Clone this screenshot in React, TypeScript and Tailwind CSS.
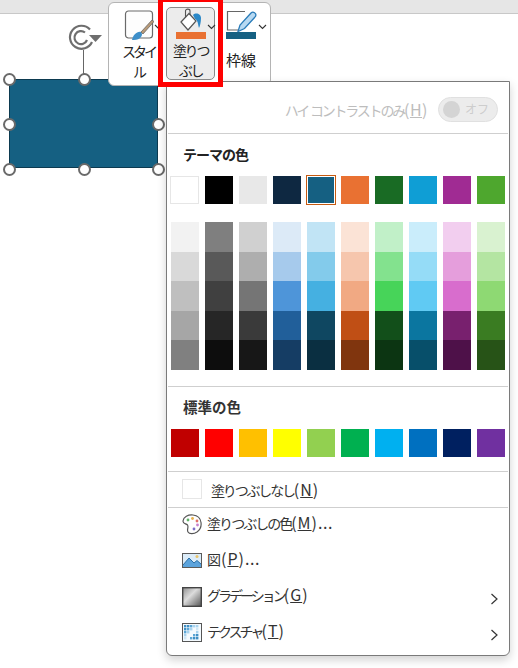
import React from "react";

const theme = ["bg-[#ffffff] border border-[#e6e6e6]", "bg-[#000000]", "bg-[#e8e8e8]", "bg-[#0e2841]", "bg-[#156082]", "bg-[#e97132]", "bg-[#196b24]", "bg-[#0f9ed5]", "bg-[#a02b93]", "bg-[#4ea72e]"];
const standard = ["bg-[#c00000]", "bg-[#ff0000]", "bg-[#ffc000]", "bg-[#ffff00]", "bg-[#92d050]", "bg-[#00b050]", "bg-[#00b0f0]", "bg-[#0070c0]", "bg-[#002060]", "bg-[#7030a0]"];
const shades = [
  ["bg-[#f2f2f2]", "bg-[#d9d9d9]", "bg-[#bfbfbf]", "bg-[#a6a6a6]", "bg-[#808080]"],
  ["bg-[#7f7f7f]", "bg-[#595959]", "bg-[#404040]", "bg-[#262626]", "bg-[#0d0d0d]"],
  ["bg-[#d0d0d0]", "bg-[#aeaeae]", "bg-[#757575]", "bg-[#3a3a3a]", "bg-[#171717]"],
  ["bg-[#dceaf7]", "bg-[#a6caec]", "bg-[#4e95d9]", "bg-[#215f9a]", "bg-[#153d64]"],
  ["bg-[#c1e4f5]", "bg-[#83cbeb]", "bg-[#45b0e1]", "bg-[#0f4761]", "bg-[#0a2f41]"],
  ["bg-[#fbe3d6]", "bg-[#f6c6ad]", "bg-[#f1a983]", "bg-[#c04f15]", "bg-[#80350e]"],
  ["bg-[#c1f0c8]", "bg-[#83e28e]", "bg-[#47d459]", "bg-[#124f1a]", "bg-[#0c3512]"],
  ["bg-[#caedfb]", "bg-[#95dcf7]", "bg-[#60caf3]", "bg-[#0b76a0]", "bg-[#074f6a]"],
  ["bg-[#f2ceef]", "bg-[#e59edc]", "bg-[#d86dcd]", "bg-[#78206e]", "bg-[#4e1149]"],
  ["bg-[#d9f2d0]", "bg-[#b4e5a2]", "bg-[#8ed973]", "bg-[#3a7c22]", "bg-[#275317]"],
];

const handles = ["left-[2.5px] top-[72.5px]", "left-[77.5px] top-[72.5px]", "left-[151.5px] top-[72.5px]", "left-[2.5px] top-[117.5px]", "left-[151.5px] top-[117.5px]", "left-[2.5px] top-[162.5px]", "left-[77.5px] top-[162.5px]", "left-[151.5px] top-[162.5px]"];

const textureCells: [number, number, string][] = [
  [2, 2, "#3f8fc4"], [5, 2, "#3f8fc4"], [8, 2, "#5ba6d6"], [11, 2, "#a8d3ee"], [14, 2, "#a8d3ee"],
  [2, 5, "#3f8fc4"], [5, 5, "#5ba6d6"], [8, 5, "#a8d3ee"], [14, 5, "#cfe6f5"],
  [2, 8, "#5ba6d6"], [5, 8, "#a8d3ee"], [14, 8, "#a8d3ee"],
  [2, 11, "#a8d3ee"], [11, 11, "#5ba6d6"], [14, 11, "#3f8fc4"],
  [2, 14, "#cfe6f5"], [8, 14, "#5ba6d6"], [11, 14, "#3f8fc4"], [14, 14, "#3f8fc4"],
];

function Chevron() {
  return (
    <svg width="9" height="14" viewBox="0 0 9 14" fill="none" stroke="#333" strokeWidth="1.2">
      <path d="M1.5 2 L7 7 L1.5 12" />
    </svg>
  );
}

function Caret({ className }: { className: string }) {
  return (
    <svg className={className} width="9" height="6" viewBox="0 0 9 6" fill="none" stroke="#333" strokeWidth="1.1">
      <path d="M1 1 L4.5 4.5 L8 1" />
    </svg>
  );
}

function Item({ icon, label, k, suffix, arrow, track }: { icon: React.ReactNode; label: string; k: string; suffix?: string; arrow?: boolean; track: string }) {
  return (
    <div className="h-[36px] flex items-center pl-[15px] pr-[10px]">
      <div className="w-[20px] h-[22px] mb-[2px] flex items-center justify-center shrink-0">{icon}</div>
      <div className="ml-[5px] mb-[6px] text-[14px] leading-[20px] text-[#333] flex-1 flex items-baseline">
        <span className={track}>{label}</span>
        <span className="text-[16px] tracking-[1px]">(<span className="underline">{k}</span>)</span>
        {suffix && <span className="text-[16px] tracking-[0.5px]">{suffix}</span>}
      </div>
      {arrow && <div className="mt-[2px]"><Chevron /></div>}
    </div>
  );
}

export default function App() {
  return (
    <div className="relative w-[518px] h-[668px] bg-white overflow-hidden font-['Noto_Sans_CJK_JP','Liberation_Sans',sans-serif]">
      <div className="h-[14px] bg-[#e6e6e6] border-b border-[#c8c8c8]" />

      {/* rotation handle */}
      <svg className="absolute left-[68px] top-[22px]" width="36" height="60" viewBox="0 0 36 60" fill="none">
        <line x1="15.5" y1="28" x2="15.5" y2="56" stroke="#666" strokeWidth="1" />
        <path d="M22 7.5 A11.5 11.5 0 1 0 24 20" stroke="#6e6e6e" strokeWidth="2.2" />
        <path d="M17 10.5 A6.5 6.5 0 1 0 19 18" stroke="#6e6e6e" strokeWidth="2.2" />
        <path d="M21 13 L34 13 L27.5 20 Z" fill="#6e6e6e" />
      </svg>

      {/* shape */}
      <div className="absolute left-[9px] top-[79px] w-[149px] h-[89px] bg-[#156082] border border-[#0c3a50]" />
      {handles.map((h) => (
        <div key={h} className={`absolute ${h} w-[13px] h-[13px] rounded-full bg-white border-2 border-[#6a6a6a]`} />
      ))}

      {/* mini toolbar */}
      <div className="absolute left-[108px] top-[2px] w-[163px] h-[84px] bg-white border border-[#b4b4b4] rounded-[6px] flex text-[14px] leading-[20px] text-[#222]">
        <div className="w-[49px] pl-[10px] flex flex-col items-center pt-[7px] relative">
          <svg className="shrink-0" width="30" height="31" viewBox="0 0 30 31" fill="none">
            <rect x="1.5" y="1" width="27" height="27" rx="3" stroke="#6a6a6a" strokeWidth="1.2" fill="#fdfdfd" />
            <path d="M8 30 C9 25 13 21 17 22 C20 25 16 31 8 30 Z" fill="#3e8fc9" />
            <path d="M17 22 L28 10 L30 11.5 L19 24 Z" fill="#b89a78" stroke="#5c5c5c" strokeWidth="0.7" />
          </svg>
          <Caret className="absolute left-[45px] top-[21px]" />
          <div className="text-center flex flex-col tracking-[-3px]">
            <span>スタイ</span>
            <span>ル</span>
          </div>
        </div>
        <div className="w-[66px]" />
        <div className="flex-1 flex flex-col items-start pl-[2px] pt-[7px] relative">
          <svg className="shrink-0" width="32" height="22" viewBox="0 0 32 22" fill="none">
            <path d="M14 1.5 L19 1.5 M19 1.5 L1.5 1.5 L1.5 20 L13 20" stroke="#666" strokeWidth="1.2" />
            <path d="M12 21.5 L14 15 L25 3 C27 1 31 3 29.5 6.5 L18.5 18.5 Z" fill="#b7d9f2" stroke="#2a7cb9" strokeWidth="1.3" />
          </svg>
          <div className="w-[30px] h-[7px] bg-[#156082]" />
          <Caret className="absolute left-[34px] top-[21px]" />
          <div className="mt-[11px] text-[15px]">枠線</div>
        </div>
      </div>

      {/* menu */}
      <div className="absolute left-[166px] top-[81px] w-[344px] h-[575px] bg-white border border-[#7a7a7a] rounded-b-[6px] shadow-[0_4px_10px_rgba(0,0,0,0.18)] text-[#333]">
        <div className="h-[51px] flex items-center justify-end pr-[11px] pt-[3px]">
          <span className="text-[14px] text-[#bdbdbd] leading-[20px] flex items-baseline">
            <span className="tracking-[-2.2px]">ハイ&nbsp;&nbsp;コントラストのみ</span>
            <span className="text-[16px] tracking-[0.5px]">(<span className="underline">H</span>)</span>
          </span>
          <div className="ml-[10px] w-[60px] h-[25px] rounded-full bg-[#ececec] border border-[#e0e0e0] flex items-center pl-[4px] pr-[8px] justify-between">
            <div className="w-[17px] h-[17px] rounded-full bg-[#d4d4d4]" />
            <span className="text-[12px] text-[#cdcdcd]">オフ</span>
          </div>
        </div>
        <div className="h-px bg-[#cfcfcf] mx-[1px]" />

        <div className="h-[42px] pl-[16px] pt-[10px] text-[14px] leading-[20px] font-bold text-[#222] tracking-[-1px]">テーマの色</div>
        <div className="flex gap-[6px] pl-[4px]">
          {theme.map((c, i) => (
            <div
              key={c}
              className={`${i === 0 ? "w-[29px] -ml-[1px]" : "w-[28px]"} h-[28px] ${c} ${i === 4 ? "border border-white outline outline-1 outline-[#c55a11]" : ""}`}
            />
          ))}
        </div>

        <div className="flex gap-[6px] pl-[4px] mt-[18px]">
          {shades.map((col) => (
            <div key={col[0]} className="w-[28px] flex flex-col">
              {col.map((c) => (
                <div key={c} className={`h-[29.6px] ${c}`} />
              ))}
            </div>
          ))}
        </div>

        <div className="h-px bg-[#cfcfcf] mx-[1px] mt-[16px]" />
        <div className="h-[42px] pl-[16px] pt-[10px] text-[14.5px] leading-[20px] font-bold text-[#333]">標準の色</div>
        <div className="flex gap-[6px] pl-[4px]">
          {standard.map((c) => (
            <div key={c} className={`w-[28px] h-[28px] ${c}`} />
          ))}
        </div>
        <div className="h-px bg-[#cfcfcf] mx-[1px] mt-[14px]" />

        <div className="h-[35px] flex items-center pl-[15px]">
          <div className="w-[20px] h-[20px] bg-white border border-[#e6e6e6]" />
          <div className="ml-[9px] text-[14px] leading-[20px] flex items-baseline">
            <span className="tracking-[-2.2px]">塗りつぶしなし</span>
            <span className="text-[16px] tracking-[1px]">(<span className="underline">N</span>)</span>
          </div>
        </div>
        <div className="h-px bg-[#cfcfcf] mx-[1px]" />

        <Item
          label="塗りつぶしの色"
          k="M"
          suffix="..."
          track="tracking-[-2px]"
          icon={
            <svg width="20" height="21" viewBox="0 0 20 21" fill="none">
              <path d="M11 1 C6 0.5 1.5 3 1 7 C0.7 10 4 9.5 5.5 11 C7 13 4.5 15.5 6 18 C7.5 20.5 12 20 15 18 C18.5 15.5 19.5 12 19 8.5 C18.5 4.5 15.5 1.5 11 1 Z" fill="white" stroke="#555" strokeWidth="1.2" />
              <circle cx="6" cy="6" r="1.4" fill="#62b36a" />
              <circle cx="10.5" cy="4.5" r="1.4" fill="#e8b04a" />
              <circle cx="15" cy="7" r="1.4" fill="#e0706a" />
              <circle cx="15.5" cy="11" r="1.4" fill="#c77fd0" />
              <circle cx="12" cy="15" r="1.4" fill="#7d6fc9" />
            </svg>
          }
        />
        <Item
          label="図"
          k="P"
          suffix="..."
          track=""
          icon={
            <svg width="20" height="15" viewBox="0 0 20 15" fill="none">
              <rect x="0.5" y="0.5" width="19" height="14" fill="#dcecf8" stroke="#5a5a5a" />
              <path d="M1 12 L7 5 L12 10 L15 7.5 L19 11 L19 14 L1 14 Z" fill="#5ba3dc" />
              <path d="M1 12 L7 5 L12 10 L15 7.5 L19 11" stroke="#2b6ea5" strokeWidth="1" />
              <circle cx="15" cy="3.5" r="1.5" fill="#e9c46a" />
            </svg>
          }
        />
        <Item
          label="グラデーション"
          k="G"
          arrow
          track="tracking-[-3px]"
          icon={
            <svg width="20" height="20" viewBox="0 0 20 20">
              <defs>
                <linearGradient id="gr" x1="0" y1="0" x2="1" y2="1">
                  <stop offset="0" stopColor="#8f8f8f" />
                  <stop offset="0.42" stopColor="#dcdcdc" />
                  <stop offset="1" stopColor="#555" />
                </linearGradient>
              </defs>
              <rect x="0.7" y="0.7" width="18.6" height="18.6" fill="url(#gr)" stroke="#444" strokeWidth="1.4" />
            </svg>
          }
        />
        <Item
          label="テクスチャ"
          k="T"
          arrow
          track="tracking-[-3px]"
          icon={
            <svg width="20" height="19" viewBox="0 0 20 19">
              <rect x="0.5" y="0.5" width="19" height="18" fill="#f4fafe" stroke="#555" />
              {textureCells.map(([x, y, c]) => (
                <rect key={`${x}-${y}`} x={x} y={y} width="2.4" height="2.4" fill={c} />
              ))}
            </svg>
          }
        />
      </div>

      {/* highlighted fill button */}
      <div className="absolute left-[158px] top-[-3px] w-[65px] h-[90px] border-[5px] border-[#ff0000] bg-white z-10 pt-[5px] px-[3px] pb-[2px]">
        <div className="w-full h-full bg-[#ececec] border border-[#8a8a8a] rounded-[5px] flex flex-col items-center relative text-[14px] leading-[20px] text-[#222]">
          <svg className="shrink-0" width="30" height="24" viewBox="0 0 30 24" fill="none">
            <path d="M5 14 L13 5.5 L20 13 L12 22 Z" fill="white" stroke="#555" strokeWidth="1.2" />
            <path d="M9.5 9.5 L9.5 3 C9.5 0.5 14 0.5 14 3 L14 7" stroke="#555" strokeWidth="1.1" />
            <path d="M17 7 C20 4 25 6 25 10 C25 14 24 18 23 20 C22 17 22 12 19 11 Z" fill="#2b88c8" />
          </svg>
          <Caret className="absolute left-[40px] top-[16px]" />
          <div className="w-[30px] h-[7px] shrink-0 bg-[#e97132]" />
          <div className="text-center flex flex-col tracking-[-2.3px] mt-[1px]">
            <span>塗りつ</span>
            <span>ぶし</span>
          </div>
        </div>
      </div>
    </div>
  );
}
